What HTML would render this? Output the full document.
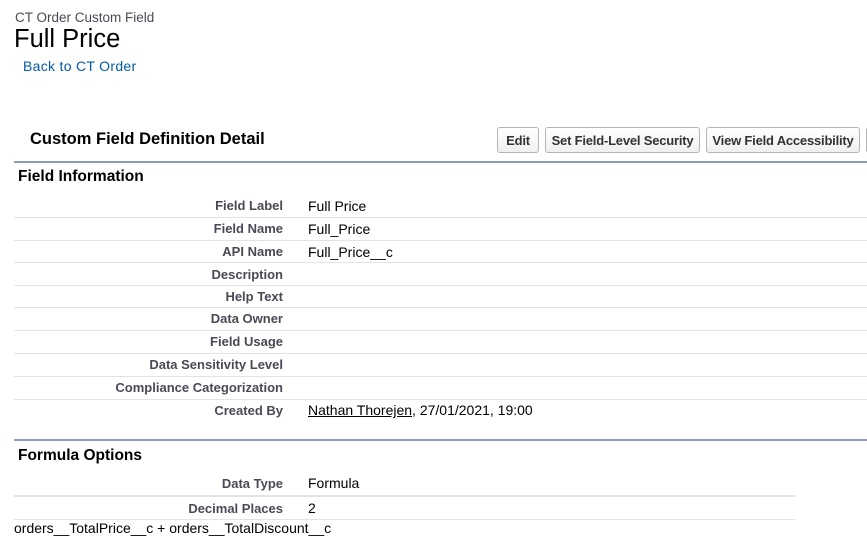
<!DOCTYPE html>
<html><head><style>
body{margin:0;width:867px;height:554px;background:#fff;font-family:"Liberation Sans",Arial,sans-serif;position:relative;overflow:hidden;color:#000}
.a{position:absolute;white-space:nowrap}
.lbl{position:absolute;right:584px;font-size:13px;font-weight:bold;color:#4a4a56;white-space:nowrap}
.val{position:absolute;left:308px;font-size:14px;color:#000;white-space:nowrap}
.ln{position:absolute;left:14px;right:0;height:1px;background:#e3e3e3}
.btn{position:absolute;top:127px;height:26px;border:1px solid #b5b5b5;border-radius:3px;background:linear-gradient(#fff,#f0f0f0);font-size:13px;font-weight:bold;color:#333;line-height:26px;text-align:center;box-sizing:border-box;letter-spacing:-0.2px}
</style></head><body>
<div class="a" style="left:15px;top:10px;font-size:13.5px;color:#4a4a56">CT Order Custom Field</div>
<div class="a" style="left:14px;top:25px;font-size:25.5px;color:#000">Full Price</div>
<div class="a" style="left:23px;top:58px;font-size:14px;color:#015ba7;letter-spacing:0.3px">Back to CT Order</div>

<div class="a" style="left:30px;top:130px;font-size:16.5px;font-weight:bold;color:#000">Custom Field Definition Detail</div>
<div class="btn" style="left:497px;width:42px">Edit</div>
<div class="btn" style="left:545px;width:155px">Set Field-Level Security</div>
<div class="btn" style="left:706px;width:154px">View Field Accessibility</div>
<div class="btn" style="left:866px;width:20px"></div>
<div class="a" style="left:14px;right:0;top:161px;height:2px;background:#8e9cba"></div>

<div class="a" style="left:18px;top:168px;font-size:15.5px;font-weight:bold">Field Information</div>

<div class="lbl" style="top:198px">Field Label</div><div class="val" style="top:198px">Full Price</div>
<div class="ln" style="top:217px"></div>
<div class="lbl" style="top:221px">Field Name</div><div class="val" style="top:221px">Full_Price</div>
<div class="ln" style="top:240px"></div>
<div class="lbl" style="top:244px">API Name</div><div class="val" style="top:244px">Full_Price__c</div>
<div class="ln" style="top:262px"></div>
<div class="lbl" style="top:267px">Description</div>
<div class="ln" style="top:285px"></div>
<div class="lbl" style="top:289px">Help Text</div>
<div class="ln" style="top:307px"></div>
<div class="lbl" style="top:311px">Data Owner</div>
<div class="ln" style="top:330px"></div>
<div class="lbl" style="top:334px">Field Usage</div>
<div class="ln" style="top:353px"></div>
<div class="lbl" style="top:357px">Data Sensitivity Level</div>
<div class="ln" style="top:376px"></div>
<div class="lbl" style="top:380px">Compliance Categorization</div>
<div class="ln" style="top:399px"></div>
<div class="lbl" style="top:403px">Created By</div><div class="val" style="top:402px"><span style="text-decoration:underline">Nathan Thorejen</span>, 27/01/2021, 19:00</div>

<div class="a" style="left:14px;right:0;top:439px;height:2px;background:#8e9cba"></div>
<div class="a" style="left:18px;top:447px;font-size:15.5px;font-weight:bold">Formula Options</div>
<div class="lbl" style="top:476px">Data Type</div><div class="val" style="top:475px">Formula</div>
<div class="a" style="left:14px;width:781px;top:495px;height:2px;background:#e3e3e3"></div>
<div class="lbl" style="top:501px">Decimal Places</div><div class="val" style="top:500px">2</div>
<div class="a" style="left:14px;width:781px;top:519px;height:1px;background:#e3e3e3"></div>
<div class="a" style="left:14px;top:520px;font-size:14px">orders__TotalPrice__c + orders__TotalDiscount__c</div>
</body></html>
